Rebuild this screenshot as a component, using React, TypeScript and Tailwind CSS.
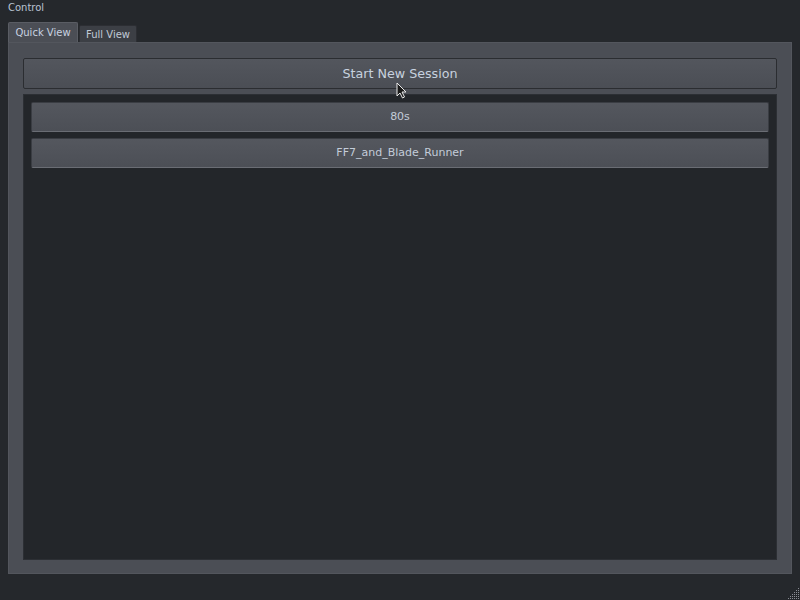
import React, { useState } from 'react';

const sessions = ['80s', 'FF7_and_Blade_Runner'];

export default function App() {
  const [tab, setTab] = useState<'quick' | 'full'>('quick');

  return (
    <div className="w-[800px] h-[600px] bg-[#25282c] text-[#c3ccd8] font-['DejaVu_Sans',sans-serif] flex flex-col relative overflow-hidden">
      {/* Window title */}
      <div className="h-[14px] px-2 pt-px text-[10px] leading-[14px] text-[#b9c3d2]">Control</div>

      <div className="flex flex-col px-2 pt-[9px] flex-1">
        {/* Tabs */}
        <div className="flex items-end h-[19px]">
          <button
            onClick={() => setTab('quick')}
            className={`w-[70px] h-[20px] rounded-t-[2px] border border-b-0 text-[10px] ${tab === 'quick' ? 'bg-[#4b4e55] border-[#5a5d64] text-[#c8d2e0]' : 'h-[17px] bg-[#3b3e44] border-[#2c2e33]'}`}
          >
            Quick View
          </button>
          <button
            onClick={() => setTab('full')}
            className={`ml-px w-[58px] rounded-t-[2px] border border-b-0 text-[10px] ${tab === 'full' ? 'h-[20px] bg-[#4b4e55] border-[#5a5d64]' : 'h-[17px] bg-[#3c3f45] border-[#2c2e33] text-[#c0c9d6]'}`}
          >
            Full View
          </button>
        </div>

        {/* Tab panel */}
        <div className="w-[784px] h-[532px] bg-[#4b4e55] border border-[#53565d] flex flex-col px-[14px] pt-[15px] pb-[13px]">
          <button className="h-[31px] w-full rounded-[2px] border border-[#2b2d31] bg-gradient-to-b from-[#53565d] to-[#4b4e55] text-[12.7px] text-[#c7d1df]">
            Start New Session
          </button>

          <div className="mt-[5px] flex-1 bg-[#23262a] border border-[#2c2f34] flex flex-col gap-[6px] px-[7px] pt-[7px]">
            {sessions.map((s) => (
              <button
                key={s}
                className="h-[30px] w-full rounded-[2px] border border-[#3a3d43] border-b-[#6a6d74] bg-gradient-to-b from-[#54575e] to-[#4c4f56] pt-px text-[11px] text-[#c3ccd9]"
              >
                {s}
              </button>
            ))}
          </div>
        </div>
      </div>

      {/* Cursor */}
      <svg className="absolute left-[396px] top-[82px]" width="12" height="17" viewBox="0 0 12 17">
        <path d="M1 1 L1 14 L4 11 L6.5 16 L8.5 15 L6 10 L10 10 Z" fill="#1a1a1a" stroke="#e8e8e8" strokeWidth="1" />
      </svg>

      {/* Resize grip */}
      <svg className="absolute right-0 bottom-0" width="12" height="12" viewBox="0 0 12 12">
        {[0, 1, 2, 3, 4, 5].map((r) =>
          [0, 1, 2, 3, 4, 5].filter((c) => c + r >= 5).map((c) => (
            <rect key={`${r}-${c}`} x={c * 2} y={r * 2} width="1" height="1" fill="#8a8d94" />
          ))
        )}
      </svg>
    </div>
  );
}
